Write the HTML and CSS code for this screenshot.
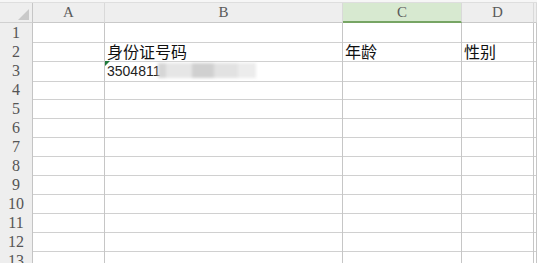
FILE: index.html
```html
<!doctype html>
<html lang="zh">
<head>
  <meta charset="utf-8">
  <title>Sheet1</title>
  <link rel="stylesheet" href="styles.css">
</head>
<body>

<div class="topstrip"></div>

<div class="sheet">
  <div class="row head">
    <div class="corner"><span class="tri"></span></div>
    <div class="col">A</div>
    <div class="col">B</div>
    <div class="col sel">C</div>
    <div class="col">D</div>
    <div class="col"></div>
  </div>

  <div class="row"><div class="num">1</div><div class="c"></div><div class="c"></div><div class="c"></div><div class="c"></div><div class="c"></div></div>
  <div class="row"><div class="num">2</div><div class="c"></div><div class="c zh">身份证号码</div><div class="c zh">年龄</div><div class="c zh">性别</div><div class="c"></div></div>
  <div class="row">
    <div class="num">3</div><div class="c"></div>
    <div class="c txt"><span class="flag"></span>3504811<span class="mosaic"><i class="m1"></i><i class="m2"></i><i class="m3"></i><i class="m4"></i><i class="m5"></i></span></div>
    <div class="c"></div><div class="c"></div><div class="c"></div>
  </div>
  <div class="row"><div class="num">4</div><div class="c"></div><div class="c"></div><div class="c"></div><div class="c"></div><div class="c"></div></div>
  <div class="row"><div class="num">5</div><div class="c"></div><div class="c"></div><div class="c"></div><div class="c"></div><div class="c"></div></div>
  <div class="row"><div class="num">6</div><div class="c"></div><div class="c"></div><div class="c"></div><div class="c"></div><div class="c"></div></div>
  <div class="row"><div class="num">7</div><div class="c"></div><div class="c"></div><div class="c"></div><div class="c"></div><div class="c"></div></div>
  <div class="row"><div class="num">8</div><div class="c"></div><div class="c"></div><div class="c"></div><div class="c"></div><div class="c"></div></div>
  <div class="row"><div class="num">9</div><div class="c"></div><div class="c"></div><div class="c"></div><div class="c"></div><div class="c"></div></div>
  <div class="row"><div class="num">10</div><div class="c"></div><div class="c"></div><div class="c"></div><div class="c"></div><div class="c"></div></div>
  <div class="row"><div class="num">11</div><div class="c"></div><div class="c"></div><div class="c"></div><div class="c"></div><div class="c"></div></div>
  <div class="row"><div class="num">12</div><div class="c"></div><div class="c"></div><div class="c"></div><div class="c"></div><div class="c"></div></div>
  <div class="row"><div class="num">13</div><div class="c"></div><div class="c"></div><div class="c"></div><div class="c"></div><div class="c"></div></div>
</div>

</body>
</html>
```

FILE: styles.css
```css
body { margin: 0; background: #fff; overflow: hidden; }

.topstrip { height: 3px; background: #f6f6f6; border-bottom: 1px solid #dedede; box-sizing: border-box; }

.row {
  display: grid;
  grid-template-columns: 33px 72px 238px 119px 72px 1fr;
  height: 19px;
}
.row.head { height: 20px; background: #eeeeee; }

.row > div { border-right: 1px solid #c6c6c6; border-bottom: 1px solid #d0d0d0; box-sizing: border-box; }

.corner { position: relative; }
.tri {
  position: absolute; right: 3px; bottom: 2px;
  width: 0; height: 0;
  border-left: 11px solid transparent;
  border-bottom: 11px solid #c9c9c9;
}

.col {
  font: normal 15px "Liberation Serif", serif;
  color: #5a5a5a;
  text-align: center;
  line-height: 19px;
  border-right-color: #d9d9d9 !important;
  border-bottom-color: #c9c9c9 !important;
}
.col.sel {
  background: #d7e9d0;
  border-bottom: 2px solid #77a564 !important;
  line-height: 18px;
}

.num {
  background: #eeeeee;
  font: normal 16px "Liberation Serif", serif;
  color: #555;
  text-align: center;
  line-height: 19px;
  border-right-color: #c4c4c4 !important;
}

.c { position: relative; white-space: nowrap; padding-left: 2px; }
.zh {
  font: normal 16px "Noto Sans CJK SC", sans-serif;
  color: #111;
  line-height: 17px;
  padding-top: 1px;
}
.txt {
  font: normal 14px "Liberation Sans", sans-serif;
  color: #222;
  line-height: 19px;
  padding-top: 1px;
}

.flag {
  position: absolute; left: 0; top: 0;
  width: 0; height: 0;
  border-top: 5px solid #217a3c;
  border-right: 5px solid transparent;
}

.mosaic {
  position: absolute; left: 53px; top: 2px;
  width: 98px; height: 15px;
  filter: blur(1.4px);
}
.mosaic i { position: absolute; top: 0; height: 15px; display: block; }
.m1 { left: 0; width: 8px; background: #d6d6d6; }
.m2 { left: 8px; width: 26px; background: #e6e6e6; }
.m3 { left: 34px; width: 22px; background: #d0d0d0; }
.m4 { left: 56px; width: 24px; background: #e2e2e2; }
.m5 { left: 80px; width: 18px; background: #ececec; }
```
